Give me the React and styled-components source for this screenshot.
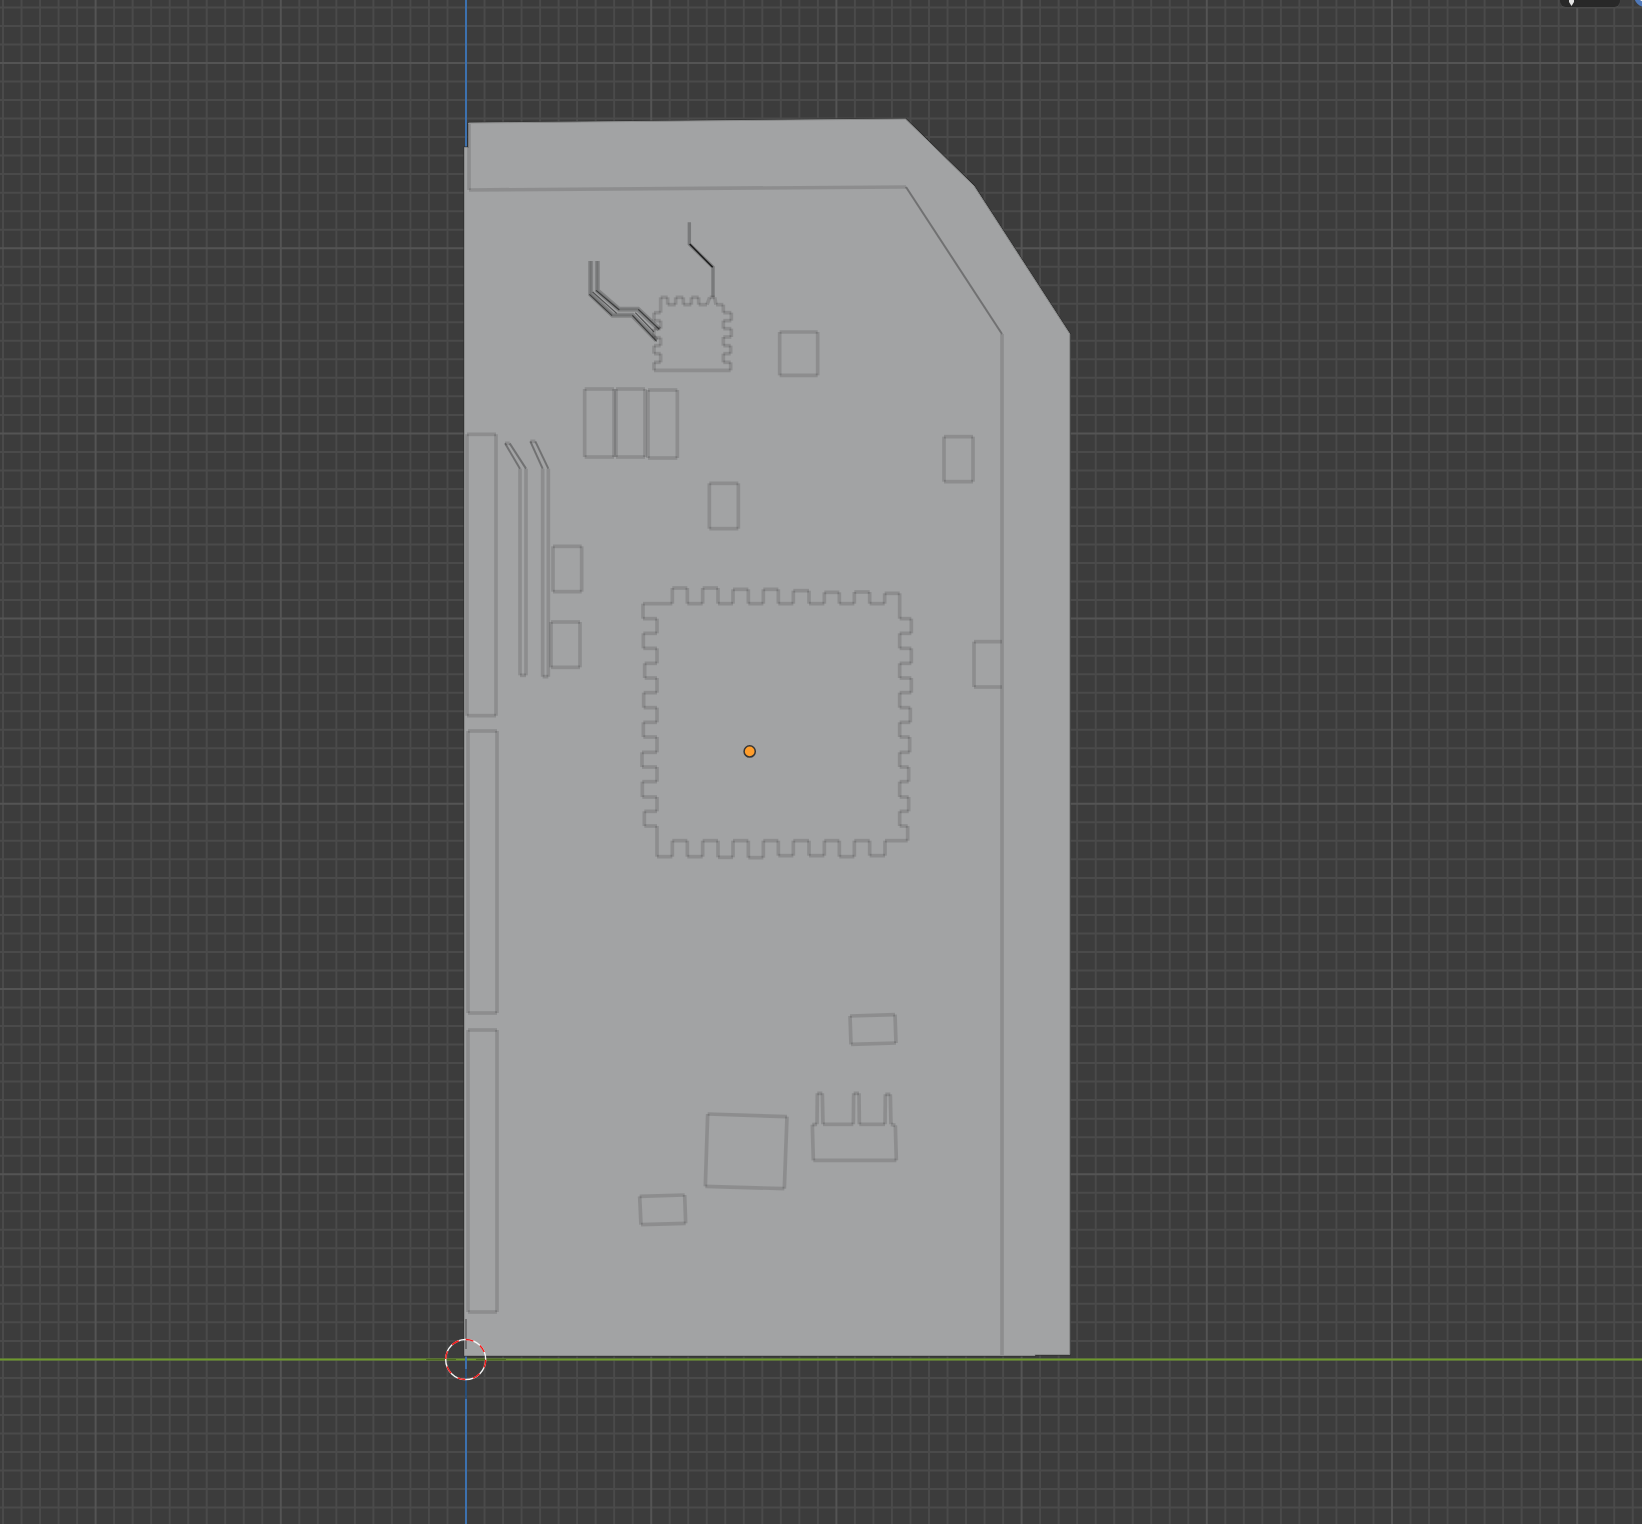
import React from "react";
import styled, { createGlobalStyle } from "styled-components";

const GlobalStyle = createGlobalStyle`
  body {
    margin: 0;
    background: #3c3c3c;
    font-family: Inter, "Liberation Sans", sans-serif;
  }
`;

const Viewport = styled.main`
  position: relative;
  height: 100vh;
  overflow: hidden;
  background: #3c3c3c;
`;

const Scene = styled.svg`
  display: block;
  width: 100%;
  height: 100%;
`;

const GridLine = styled.line`
  stroke: ${(p) => (p.$major ? "#545454" : "#4a4a4a")};
  stroke-width: 2;
`;

const Axis = styled.line`
  stroke: ${(p) => p.$color};
  stroke-width: 2;
`;

const Face = styled.path`
  fill: #a2a3a4;
  stroke: ${(p) => (p.$shadow ? "#2c2c2c" : "#8b8c8c")};
  stroke-width: ${(p) => (p.$shadow ? 2 : 1)};
`;

const Edge = styled.line`
  stroke: #000;
  stroke-opacity: ${(p) => (p.$slanted ? 0.3 : 0.13)};
  stroke-width: ${(p) => (p.$slanted ? 2 : 3.7)};
`;

const Trace = styled.polyline`
  fill: none;
  stroke: #000;
  stroke-opacity: ${(p) => p.$alpha};
  stroke-width: ${(p) => p.$width};
`;

const OriginDot = styled.circle`
  fill: #ff9d2b;
  stroke: #353535;
  stroke-width: 1.5;
`;

const CursorRing = styled.circle`
  fill: none;
  stroke: ${(p) => p.$color};
  stroke-width: 1.4;
`;

const CursorArm = styled.line`
  stroke: #000;
  stroke-opacity: 0.3;
  stroke-width: ${(p) => p.$width};
`;

const HeaderTools = styled.div`
  position: absolute;
  top: -16px;
  right: -15px;
  display: flex;
  gap: 14px;
`;

const DropButton = styled.button`
  width: 60px;
  height: 23px;
  padding: 0 8px;
  display: flex;
  align-items: flex-end;
  border: 0;
  border-radius: 6px;
  background: #282828;
  box-shadow: 0 1px 1px #4b4b4b;
`;

const RoundButton = styled.button`
  width: 23px;
  height: 23px;
  padding: 0;
  display: flex;
  align-items: center;
  justify-content: center;
  border: 0;
  border-radius: 12px;
  background: #4f78b8;
`;

const STEP = 18.52;
const GRID_X = 3;
const GRID_Y = 7.44;

const gridLines = (start, majorOffset) =>
  Array.from({ length: 240 }, (_, i) => ({
    at: start + i * STEP,
    major: i % 10 === majorOffset,
  }));

const columns = gridLines(GRID_X, 5);
const rows = gridLines(GRID_Y, 3);

// Outlines are listed in thirds of a pixel from their own origin.
const place = (ox, oy, pts) => pts.map(([x, y]) => [ox + x / 3, oy + y / 3]);
const box = (x1, y1, x2, y2) => [[x1, y1], [x2, y1], [x2, y2], [x1, y2]];
const text = (pts) => pts.map((p) => p.join(",")).join(" ");

const smallChip = [
  [302, 292], [323, 292], [323, 314], [347, 314], [347, 292], [370, 292], [370, 314],
  [394, 314], [394, 292], [416, 292], [416, 314], [441, 314], [449, 292], [464, 292],
  [468, 314], [490, 314], [490, 338], [514, 338], [514, 362], [490, 362], [490, 386],
  [514, 386], [514, 411], [490, 411], [490, 437], [512, 437], [512, 461], [490, 461],
  [490, 487], [512, 487], [512, 511], [282, 511], [282, 487], [302, 487], [302, 461],
  [282, 461], [282, 437], [302, 437], [302, 413], [282, 413], [282, 386], [302, 386],
  [302, 362], [282, 362], [282, 338], [302, 338],
];

const largeChip = [
  [69, 101], [157, 101], [157, 54], [202, 54], [202, 101], [248, 101], [248, 54],
  [294, 54], [294, 101], [339, 101], [339, 58], [385, 58], [385, 101], [430, 101],
  [430, 58], [475, 58], [475, 101], [520, 101], [520, 62], [567, 62], [567, 101],
  [613, 101], [613, 67], [658, 67], [658, 101], [703, 101], [703, 66], [749, 66],
  [749, 101], [794, 101], [794, 70], [839, 70], [839, 146], [874, 146], [874, 190],
  [839, 190], [839, 235], [874, 235], [874, 280], [839, 280], [839, 324], [874, 324],
  [874, 368], [839, 368], [839, 413], [871, 413], [871, 457], [839, 457], [839, 501],
  [869, 501], [869, 547], [839, 547], [839, 591], [866, 591], [866, 635], [839, 635],
  [839, 681], [866, 681], [866, 724], [839, 724], [839, 768], [863, 768], [863, 812],
  [795, 812], [795, 857], [749, 857], [749, 812], [703, 812], [703, 860], [658, 860],
  [658, 812], [613, 812], [613, 857], [567, 857], [567, 812], [520, 812], [520, 857],
  [475, 857], [475, 812], [430, 812], [430, 863], [385, 863], [385, 812], [339, 812],
  [339, 862], [294, 862], [294, 812], [248, 812], [248, 860], [202, 860], [202, 812],
  [157, 812], [157, 860], [111, 860], [111, 768], [73, 768], [73, 724], [111, 724],
  [111, 681], [67, 681], [67, 635], [111, 635], [111, 591], [66, 591], [66, 547],
  [111, 547], [111, 501], [70, 501], [70, 457], [111, 457], [111, 413], [71, 413],
  [71, 368], [111, 368], [111, 324], [74, 324], [74, 280], [111, 280], [111, 235],
  [70, 235], [70, 190], [111, 190], [111, 146], [69, 146],
];

const connector = [
  [577, 374], [591, 373], [592, 280], [607, 280], [609, 373], [700, 373], [701, 280],
  [717, 280], [718, 373], [795, 373], [796, 283], [811, 283], [813, 373], [826, 376],
  [829, 481], [580, 481],
];

const outlines = [
  place(560, 200, smallChip),
  place(620, 570, largeChip),
  place(620, 1000, connector),
  place(560, 200, box(659, 396, 773, 526)),
  place(560, 200, box(74, 567, 162, 771)),
  place(560, 200, box(168, 567, 255, 771)),
  place(560, 200, box(264, 570, 352, 774)),
  place(455, 420, box(763, 190, 850, 326)),
  place(455, 420, box(294, 379, 380, 515)),
  place(455, 420, box(288, 606, 375, 742)),
  place(455, 420, box(36, 43, 123, 887)),
  place(920, 410, box(72, 80, 159, 215)),
  place(620, 1000, [[690, 48], [825, 44], [828, 129], [693, 133]]),
  place(620, 1000, [[263, 342], [501, 350], [493, 566], [256, 559]]),
  place(620, 1000, [[59, 589], [194, 585], [197, 670], [63, 674]]),
  place(455, 420, [[150, 70], [164, 70], [213, 146], [213, 766], [195, 766], [195, 146]]),
  place(455, 420, [[226, 64], [241, 64], [280, 146], [280, 770], [263, 770], [263, 146]]),
  [[468, 731], [497, 731], [497, 1013], [468, 1013]],
  [[468, 1030], [497, 1030], [497, 1312], [468, 1312]],
];

const openEdges = [
  place(920, 410, [[246, 695], [162, 695], [162, 831], [246, 831]]),
  [[469, 124], [469, 190], [906, 187], [1002, 334], [1002, 1355]],
];

const ribbon = [
  [[92, 183], [92, 283], [158, 346], [217, 346], [290, 421]],
  [[112, 183], [112, 272], [177, 328], [234, 328], [298, 388]],
].map((pts) => place(560, 200, pts));

const slopes = [
  [[88, 283], [156, 347]],
  [[98, 276], [170, 340]],
  [[108, 271], [178, 330]],
  [[217, 346], [290, 424]],
  [[226, 338], [282, 396]],
  [[235, 328], [298, 388]],
].map((pts) => place(560, 200, pts));

function Outline({ points, closed }) {
  const ends = closed ? [...points.slice(1), points[0]] : points.slice(1);
  return ends.map(([x2, y2], i) => {
    const [x1, y1] = points[i];
    const slanted = Math.abs(x2 - x1) > 4 && Math.abs(y2 - y1) > 4;
    return <Edge key={i} x1={x1} y1={y1} x2={x2} y2={y2} $slanted={slanted} />;
  });
}

function Grid() {
  const draw = (major) => (
    <>
      {columns.filter((l) => l.major === major).map((l) => (
        <GridLine key={`c${l.at}`} x1={l.at} x2={l.at} y1={0} y2={4400} $major={major} />
      ))}
      {rows.filter((l) => l.major === major).map((l) => (
        <GridLine key={`r${l.at}`} x1={0} x2={4400} y1={l.at} y2={l.at} $major={major} />
      ))}
    </>
  );
  return (
    <g>
      {draw(false)}
      {draw(true)}
    </g>
  );
}

const SILHOUETTE =
  "M464.5 147.5H468.5V123L905.5 119L974 186L1069.8 334V1354.5H1035V1355.5H464.5Z";

function Board() {
  return (
    <g>
      <Face d={SILHOUETTE} $shadow />
      <Face d={SILHOUETTE} />
      {outlines.map((pts, i) => (
        <Outline key={i} points={pts} closed />
      ))}
      {openEdges.map((pts, i) => (
        <Outline key={i} points={pts} />
      ))}
      {ribbon.map((pts, i) => (
        <Trace key={i} points={text(pts)} $alpha={0.19} $width={5} />
      ))}
      {ribbon.map((pts, i) => (
        <Trace key={i} points={text(pts)} $alpha={0.12} $width={2} />
      ))}
      {slopes.map((pts, i) => (
        <Trace key={i} points={text(pts)} $alpha={0.5} $width={1.1} />
      ))}
      <Trace
        points={text(place(560, 200, [[388, 67], [388, 132], [459, 202], [459, 292]]))}
        $alpha={0.25}
        $width={3.4}
      />
      <Trace
        points={text(place(560, 200, [[389, 132], [458, 202]]))}
        $alpha={0.8}
        $width={1.4}
      />
    </g>
  );
}

function Cursor() {
  const cx = 465.7;
  const cy = 1359.5;
  const dash = (Math.PI * 40) / 16;
  return (
    <g>
      <CursorArm x1={426} x2={456} y1={cy} y2={cy} $width={1} />
      <CursorArm x1={476} x2={506} y1={cy} y2={cy} $width={1} />
      <CursorArm x1={466} x2={466} y1={1319} y2={1349} $width={2} />
      <CursorArm x1={466} x2={466} y1={1369} y2={1399} $width={2} />
      <CursorRing cx={cx} cy={cy} r={20} $color="#f4f4f4" />
      <CursorRing
        cx={cx}
        cy={cy}
        r={20}
        $color="#f01818"
        strokeDasharray={`${dash} ${dash}`}
        transform={`rotate(-90 ${cx} ${cy})`}
      />
    </g>
  );
}

export default function App() {
  return (
    <Viewport>
      <GlobalStyle />
      <Scene role="img" aria-label="Circuit board, side view">
        <Grid />
        <Axis x1={0} x2={4400} y1={1359.5} y2={1359.5} $color="#6d982c" />
        <Axis x1={466} x2={466} y1={0} y2={4400} $color="#3d71ae" />
        <Board />
        <OriginDot cx={749.7} cy={751.4} r={5.6} />
        <Cursor />
      </Scene>
      <HeaderTools>
        <DropButton type="button" aria-label="Snap options">
          <svg width="7" height="10" viewBox="0 0 7 10" aria-hidden="true">
            <path d="M1 0H6V5L3.500 9L1 5Z" fill="#e4e4e4" />
          </svg>
        </DropButton>
        <RoundButton type="button" aria-label="Proportional editing">
          <svg width="15" height="15" viewBox="0 0 15 15" aria-hidden="true">
            <circle cx="7" cy="7" r="6" fill="none" stroke="#f0f0f0" strokeWidth="2" />
          </svg>
        </RoundButton>
      </HeaderTools>
    </Viewport>
  );
}
